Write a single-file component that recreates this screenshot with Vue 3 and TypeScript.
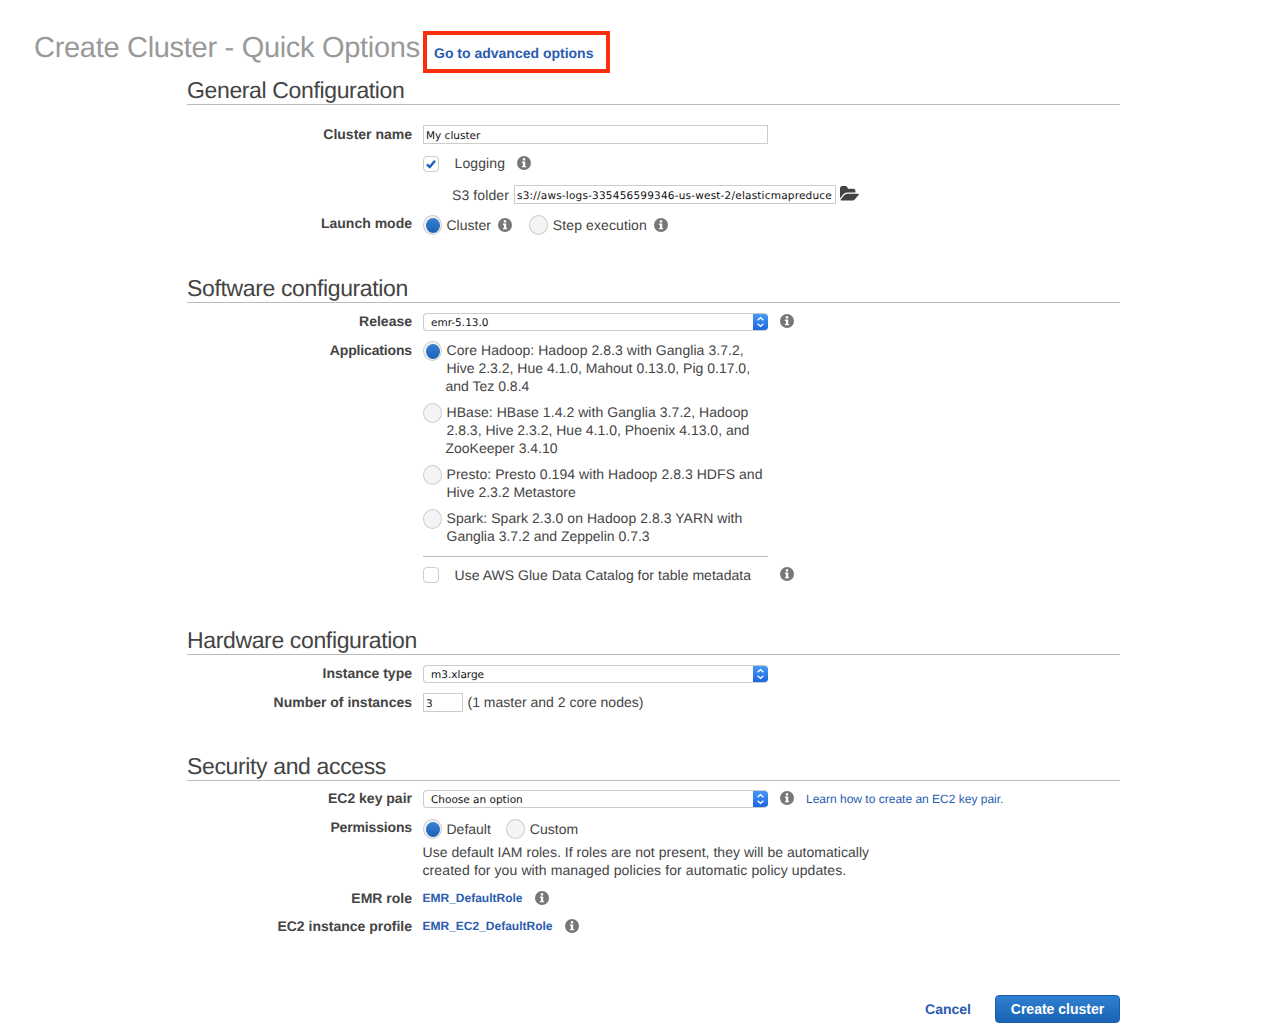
<script setup lang="ts">
interface AppOption {
  id: string
  lines: string[]
  selected: boolean
}

const applications: AppOption[] = [
  {
    id: 'core',
    lines: ['Core Hadoop: Hadoop 2.8.3 with Ganglia 3.7.2,', 'Hive 2.3.2, Hue 4.1.0, Mahout 0.13.0, Pig 0.17.0,', 'and Tez 0.8.4'],
    selected: true,
  },
  {
    id: 'hbase',
    lines: ['HBase: HBase 1.4.2 with Ganglia 3.7.2, Hadoop', '2.8.3, Hive 2.3.2, Hue 4.1.0, Phoenix 4.13.0, and', 'ZooKeeper 3.4.10'],
    selected: false,
  },
  {
    id: 'presto',
    lines: ['Presto: Presto 0.194 with Hadoop 2.8.3 HDFS and', 'Hive 2.3.2 Metastore'],
    selected: false,
  },
  {
    id: 'spark',
    lines: ['Spark: Spark 2.3.0 on Hadoop 2.8.3 YARN with', 'Ganglia 3.7.2 and Zeppelin 0.7.3'],
    selected: false,
  },
]
</script>

<template>
  <div class="page">
    <svg class="defs" width="0" height="0" aria-hidden="true">
      <symbol id="info" viewBox="0 0 14 14">
        <path
          fill-rule="evenodd"
          d="M7 0a7 7 0 1 1 0 14A7 7 0 0 1 7 0zM5.800 2.300v2.100h2.400V2.300zM4.900 5.600v1.300h1v3H4.900v1.400h4.200V9.900H8.200V5.600z"
        />
      </symbol>
      <symbol id="updown" viewBox="0 0 15 18">
        <path d="M4.500 7.200 7.500 4.700 10.500 7.200M4.500 10.800l3 2.500 3-2.500" fill="none" stroke="#fff" stroke-width="1.300" />
      </symbol>
    </svg>

    <header class="title-row">
      <h1>Create Cluster - Quick Options</h1>
      <div class="highlight"><a class="link strong">Go to advanced options</a></div>
    </header>

    <main class="content">
      <section class="general">
        <h2>General Configuration</h2>
        <div class="row r-name">
          <label>Cluster name</label>
          <div class="field"><span class="input wide">My cluster</span></div>
        </div>
        <div class="row r-logging">
          <span></span>
          <div class="field">
            <span class="check on">
              <svg viewBox="0 0 16 16" width="16" height="16"><path d="M4 8.300 6.800 11 12 4.800" fill="none" stroke="#1b62b8" stroke-width="2.400" /></svg>
            </span>
            <span class="check-text logging-text">Logging</span>
            <svg class="info logging-info"><use href="#info" /></svg>
          </div>
        </div>
        <div class="row r-s3">
          <span></span>
          <div class="field s3">
            <span class="s3-label">S3 folder</span>
            <span class="input s3-input">s3://aws-logs-335456599346-us-west-2/elasticmapreduce</span>
            <svg class="folder" viewBox="0 0 1920 1792" width="20" height="18">
              <path
                fill="#444"
                d="M1845 931q0 35-53 93l-336 396q-43 51-120.500 86.500t-143.500 35.500h-1088q-34 0-60.500-13t-26.500-43q0-35 53-93l336-396q43-51 120.500-86.500t143.500-35.500h1088q34 0 60.500 13t26.500 43zm-343-344v160h-832q-94 0-197 47.500t-164 119.500l-337 396-5 6q0-4-.5-12.500t-.5-12.500v-960q0-92 66-158t158-66h320q92 0 158 66t66 158v32h544q92 0 158 66t66 158z"
              />
            </svg>
          </div>
        </div>
        <div class="row r-launch">
          <label>Launch mode</label>
          <div class="field">
            <span class="radio on"></span>
            <span class="radio-text">Cluster</span>
            <svg class="info launch-info"><use href="#info" /></svg>
            <span class="radio second"></span>
            <span class="radio-text step-text">Step execution</span>
            <svg class="info launch-info"><use href="#info" /></svg>
          </div>
        </div>
      </section>

      <section class="software">
        <h2>Software configuration</h2>
        <div class="row r-select">
          <label>Release</label>
          <div class="field">
            <span class="select"><span>emr-5.13.0</span><span class="stepper"><svg width="15" height="18"><use href="#updown" /></svg></span></span>
            <svg class="info after-select"><use href="#info" /></svg>
          </div>
        </div>
        <div class="row r-apps">
          <label class="tight">Applications</label>
          <div class="apps">
            <div v-for="app in applications" :key="app.id" class="app">
              <span class="radio" :class="{ on: app.selected }"></span>
              <p class="app-text">
                <span v-for="(line, i) in app.lines" :key="i" class="app-line">{{ line }}</span>
              </p>
            </div>
            <div class="divider"></div>
            <div class="glue">
              <span class="check"></span>
              <span class="check-text glue-text">Use AWS Glue Data Catalog for table metadata</span>
              <svg class="info glue-info"><use href="#info" /></svg>
            </div>
          </div>
        </div>
      </section>

      <section class="hardware">
        <h2>Hardware configuration</h2>
        <div class="row r-select">
          <label>Instance type</label>
          <div class="field">
            <span class="select"><span>m3.xlarge</span><span class="stepper"><svg width="15" height="18"><use href="#updown" /></svg></span></span>
          </div>
        </div>
        <div class="row r-count">
          <label>Number of instances</label>
          <div class="field">
            <span class="input count">3</span>
            <span class="count-text">(1 master and 2 core nodes)</span>
          </div>
        </div>
      </section>

      <section class="security">
        <h2>Security and access</h2>
        <div class="row r-key">
          <label>EC2 key pair</label>
          <div class="field">
            <span class="select"><span>Choose an option</span><span class="stepper"><svg width="15" height="18"><use href="#updown" /></svg></span></span>
            <svg class="info after-select"><use href="#info" /></svg>
            <a class="link learn">Learn how to create an EC2 key pair.</a>
          </div>
        </div>
        <div class="row r-perm">
          <label class="tight">Permissions</label>
          <div class="field">
            <span class="radio on"></span>
            <span class="radio-text">Default</span>
            <span class="radio custom"></span>
            <span class="radio-text custom-text">Custom</span>
          </div>
        </div>
        <div class="row r-note">
          <span></span>
          <p class="note">
            <span class="note-line">Use default IAM roles. If roles are not present, they will be automatically</span>
            <span class="note-line second-line">created for you with managed policies for automatic policy updates.</span>
          </p>
        </div>
        <div class="row r-role first-role">
          <label>EMR role</label>
          <div class="field">
            <a class="link role">EMR_DefaultRole</a>
            <svg class="info role-info"><use href="#info" /></svg>
          </div>
        </div>
        <div class="row r-role second-role">
          <label>EC2 instance profile</label>
          <div class="field">
            <a class="link role">EMR_EC2_DefaultRole</a>
            <svg class="info role-info"><use href="#info" /></svg>
          </div>
        </div>
      </section>

      <footer class="actions">
        <a class="link strong cancel">Cancel</a>
        <button class="create" type="button">Create cluster</button>
      </footer>
    </main>
  </div>
</template>

<style>
html,
body {
  margin: 0;
  background: #fff;
}
</style>

<style scoped>
.page {
  width: 1279px;
  height: 1031px;
  overflow: hidden;
  box-sizing: border-box;
  padding: 30px 0 0 34px;
  font-family: 'Liberation Sans', Arial, sans-serif;
  font-size: 14px;
  line-height: 18px;
  color: #444;
  text-rendering: geometricPrecision;
}
.defs {
  position: absolute;
}
.title-row {
  display: flex;
  align-items: flex-start;
  height: 43px;
}
h1 {
  width: 389px;
  margin: 1px 0 0;
  font-size: 29px;
  line-height: 35px;
  font-weight: 400;
  letter-spacing: -0.3px;
  color: #999;
  white-space: nowrap;
}
.highlight {
  box-sizing: border-box;
  width: 187px;
  height: 42px;
  margin-top: 1px;
  border: 4px solid #fb2f0d;
  padding: 9px 0 0 7px;
  white-space: nowrap;
}
.link {
  color: #2a5cb0;
}
.strong {
  font-weight: 700;
}
.content {
  width: 933px;
  margin-left: 153px;
  padding-top: 6px;
}
h2 {
  box-sizing: border-box;
  height: 26px;
  margin: 0;
  font-size: 23px;
  line-height: 22px;
  font-weight: 400;
  letter-spacing: -0.36px;
  color: #444;
  border-bottom: 1px solid #bbb;
  white-space: nowrap;
}
.software {
  margin-top: 42px;
}
.hardware {
  margin-top: 46px;
}
.security {
  margin-top: 43px;
}
.row {
  display: grid;
  grid-template-columns: 225px 1fr;
  column-gap: 11px;
}
label {
  text-align: right;
  font-weight: 700;
  white-space: nowrap;
}
label.tight {
  letter-spacing: -0.15px;
}
.field {
  display: flex;
  align-items: center;
  white-space: nowrap;
}
.r-name {
  margin-top: 20px;
  height: 19px;
}
.r-logging {
  margin-top: 12px;
  height: 16px;
}
.r-s3 {
  margin-top: 13px;
  height: 19px;
}
.r-launch {
  margin-top: 11px;
  height: 20px;
}
.r-launch label {
  margin-top: -1px;
}
.r-select {
  margin-top: 10px;
  height: 18px;
}
.r-key {
  margin-top: 9px;
  height: 18px;
}
.r-select label,
.r-key label {
  margin-top: -1px;
}
.r-apps {
  margin-top: 10px;
}
.r-count {
  margin-top: 10px;
  height: 19px;
}
.r-perm {
  margin-top: 11px;
  height: 20px;
}
.r-perm label {
  margin-top: -1px;
}
.r-note {
  margin-top: 4px;
}
.first-role {
  margin-top: 10px;
  height: 18px;
}
.second-role {
  margin-top: 10px;
  height: 18px;
}
.input {
  box-sizing: border-box;
  display: block;
  height: 19px;
  border: 1px solid #ccc;
  padding-left: 2px;
  font-family: 'DejaVu Sans', sans-serif;
  font-size: 10.5px;
  line-height: 20px;
  color: #111;
  background: #fff;
}
.wide {
  width: 345px;
}
.s3-label {
  margin-left: 29px;
  width: 62px;
  letter-spacing: 0.1px;
}
.s3-input {
  width: 322px;
  overflow: hidden;
  letter-spacing: 0.2px;
}
.folder {
  margin: -2px 0 0 4px;
}
.count {
  width: 40px;
}
.count-text {
  margin: -1px 0 0 4.5px;
}
.check {
  box-sizing: border-box;
  flex: none;
  display: block;
  width: 16px;
  height: 16px;
  border: 1px solid #ccc;
  border-radius: 4px;
  background: #fff;
  overflow: hidden;
}
.check svg {
  display: block;
  margin: -1px;
}
.check-text {
  margin-left: 15.5px;
}
.logging-text {
  margin-top: -2px;
  letter-spacing: 0.1px;
}
.glue-text {
  letter-spacing: 0.03px;
}
.info {
  flex: none;
  display: block;
  width: 14px;
  height: 14px;
  fill: #777;
}
.logging-info {
  margin: -2px 0 0 12px;
}
.launch-info {
  margin-left: 7px;
}
.after-select {
  margin: -2px 0 0 12px;
}
.glue-info {
  margin: -2px 0 0 29px;
}
.role-info {
  margin-left: 12px;
}
.radio {
  box-sizing: border-box;
  flex: none;
  display: block;
  position: relative;
  width: 19px;
  height: 20px;
  border: 1px solid #ccc;
  border-radius: 50%;
  background: #f4f4f4;
}
.radio.on::after {
  content: '';
  position: absolute;
  inset: 1.5px;
  border-radius: 50%;
  background: linear-gradient(#3a80d2, #1862b5);
}
.radio-text {
  margin-left: 4.5px;
}
.step-text {
  margin-left: 5px;
  letter-spacing: 0.1px;
}
.custom-text {
  margin-left: 5px;
}
.radio.second {
  margin-left: 17px;
}
.radio.custom {
  margin-left: 15px;
}
.select {
  box-sizing: border-box;
  display: flex;
  justify-content: space-between;
  width: 345px;
  height: 18px;
  padding-left: 7px;
  border: 1px solid #ccc;
  border-right: 0;
  border-radius: 4px;
  font-family: 'DejaVu Sans', sans-serif;
  font-size: 10.5px;
  line-height: 18px;
  color: #111;
  background: #fff;
  overflow: hidden;
}
.stepper {
  flex: none;
  display: block;
  width: 15px;
  height: 18px;
  margin-top: -1px;
  background: linear-gradient(#4c9bf8, #1664e0);
}
.stepper svg {
  display: block;
}
.apps {
  width: 400px;
}
.app {
  display: flex;
  margin-bottom: 8px;
}
.app-text {
  margin: 0 0 0 4.5px;
  white-space: nowrap;
}
.app-line {
  display: block;
}
.app-line:first-child {
  letter-spacing: 0.05px;
}
.app-line:nth-child(3) {
  margin-left: -1px;
}
.divider {
  width: 345px;
  height: 1px;
  margin-top: 11px;
  background: #bbb;
}
.glue {
  display: flex;
  align-items: center;
  height: 16px;
  margin-top: 10px;
}
.learn {
  margin-left: 12px;
  font-size: 12px;
}
.note {
  margin: 0 0 0 -0.5px;
  white-space: nowrap;
}
.note-line {
  display: block;
  letter-spacing: 0.03px;
}
.note-line.second-line {
  letter-spacing: 0.1px;
}
.role {
  margin-left: -0.5px;
  font-size: 12px;
  font-weight: 700;
}
.actions {
  display: flex;
  justify-content: flex-end;
  align-items: center;
  margin-top: 60px;
}
.cancel {
  margin-right: 24px;
}
.create {
  width: 125px;
  height: 28px;
  padding: 0;
  border: 1px solid #1c5fa8;
  border-radius: 4px;
  background: linear-gradient(#2f80d2, #1a62b4);
  color: #fff;
  font-family: inherit;
  font-size: 14px;
  font-weight: 700;
}
</style>
